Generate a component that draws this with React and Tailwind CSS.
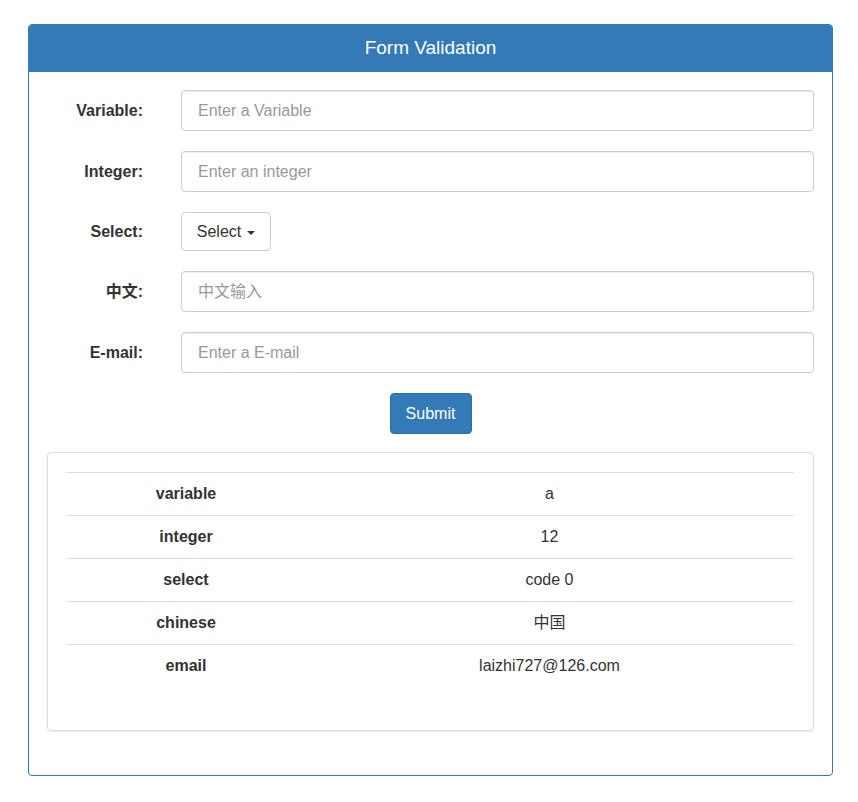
import React from "react";

const fields = [
  { label: "Variable:", placeholder: "Enter a Variable" },
  { label: "Integer:", placeholder: "Enter an integer" },
  { label: "Select:", select: true },
  { label: "中文:", placeholder: "中文输入" },
  { label: "E-mail:", placeholder: "Enter a E-mail" },
];

const rows = [
  ["variable", "a"],
  ["integer", "12"],
  ["select", "code 0"],
  ["chinese", "中国"],
  ["email", "laizhi727@126.com"],
];

export default function App() {
  return (
    <div
      className="min-h-screen bg-white text-[#333] pt-[24px] pl-[28px] pr-[25px]"
      style={{ fontFamily: '"Liberation Sans", Arial, "Noto Sans CJK SC", sans-serif' }}
    >
      <div className="w-[805px] border border-[#337ab7] rounded-[4px] overflow-hidden">
        {/* heading */}
        <div className="h-[47px] bg-[#337ab7] text-white text-[19px] flex items-center justify-center">
          Form Validation
        </div>

        <div className="px-[18px] pt-[18px] pb-[44px]">
          <div className="flex flex-col gap-[20px]">
            {fields.map((f) => (
              <div key={f.label} className="flex items-center">
                <label className="w-[116px] pr-[20px] text-right font-bold text-[16px] shrink-0">
                  {f.label}
                </label>
                <div className="ml-[18px] flex-1">
                  {f.select ? (
                    <button className="h-[39px] w-[90px] border border-[#ccc] rounded-[4px] bg-white text-[16px] text-[#333] flex items-center justify-center gap-[6px]">
                      Select
                      <span className="inline-block w-0 h-0 border-x-[4px] border-x-transparent border-t-[4px] border-t-[#333] mt-[2px]" />
                    </button>
                  ) : (
                    <input
                      className="w-full h-[41px] border border-[#ccc] rounded-[4px] px-[16px] text-[16px] placeholder:text-[#999] outline-none shadow-[inset_0_1px_1px_rgba(0,0,0,0.075)]"
                      placeholder={f.placeholder}
                    />
                  )}
                </div>
              </div>
            ))}
          </div>

          <div className="flex justify-center mt-[20px]">
            <button className="h-[41px] w-[82px] bg-[#337ab7] border border-[#2e6da4] rounded-[4px] text-white text-[16px]">
              Submit
            </button>
          </div>

          <div className="mt-[18px] border border-[#ddd] rounded-[4px] shadow-[0_1px_2px_rgba(0,0,0,0.08)] pt-[19px] px-[19px] pb-[42px]">
            <table className="w-full text-[16px] border-collapse">
              <tbody>
                {rows.map(([k, v], i) => (
                  <tr key={k} className={i < 4 ? "border-y border-[#ddd]" : "border-t border-[#ddd]"}>
                    <td className="w-[238px] h-[43px] text-center font-bold">{k}</td>
                    <td className="h-[43px] text-center">{v}</td>
                  </tr>
                ))}
              </tbody>
            </table>
          </div>
        </div>
      </div>
    </div>
  );
}
